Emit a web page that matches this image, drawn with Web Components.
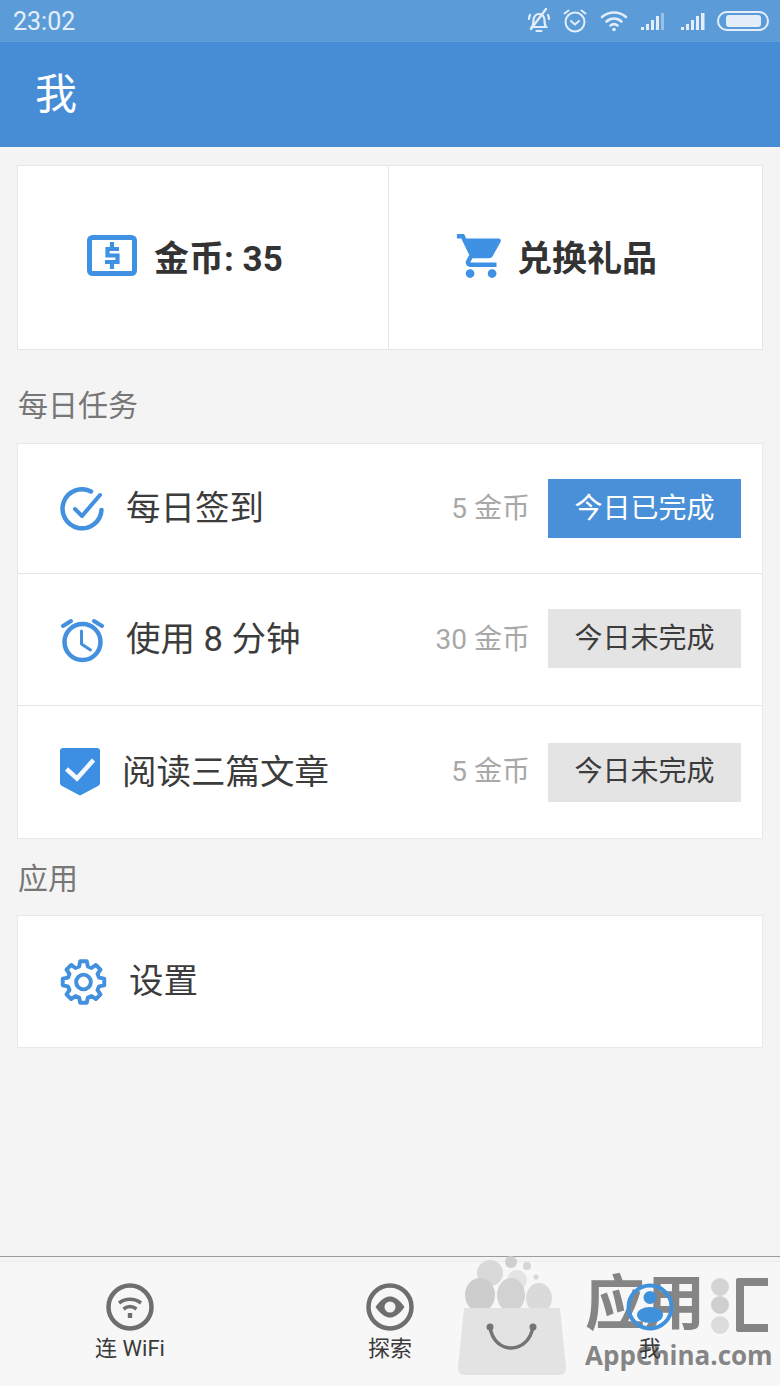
<!DOCTYPE html>
<html lang="zh">
<head>
<meta charset="utf-8">
<title>我</title>
<style>
  html, body { margin: 0; padding: 0; }
  body {
    width: 780px;
    height: 1386px;
    overflow: hidden;
    background: #f4f4f4;
    display: flex;
    flex-direction: column;
    position: relative;
    font-family: Roboto, "Noto Sans CJK SC", sans-serif;
  }
  main-content { flex: 1; }
</style>
</head>
<body>
  <status-bar time="23:02"></status-bar>
  <app-header>我</app-header>
  <main-content>
    <coin-card></coin-card>
    <section-label style="--label-top:41px;--label-bottom:22px">每日任务</section-label>
    <list-card>
      <task-row icon="check" coins="5 金币" height="129">每日签到<state-button slot="action" done>今日已完成</state-button></task-row>
      <task-row icon="clock" coins="30 金币" height="131">使用 8 分钟<state-button slot="action" style="margin-bottom:2px">今日未完成</state-button></task-row>
      <task-row icon="shield" coins="5 金币" height="132" last>阅读三篇文章<state-button slot="action">今日未完成</state-button></task-row>
    </list-card>
    <section-label style="--label-top:25px;--label-bottom:21px">应用</section-label>
    <list-card>
      <task-row icon="gear" height="131" last>设置</task-row>
    </list-card>
  </main-content>
  <tab-bar>
    <tab-item icon="wifi">连 WiFi</tab-item>
    <tab-item icon="eye">探索</tab-item>
    <tab-item icon="me">我</tab-item>
  </tab-bar>
  <app-watermark></app-watermark>

<script>
const FONT = 'Roboto, "Noto Sans CJK SC", sans-serif';
const BLUE = "#4a90d9";

// 8 rounded teeth, just computed instead of hand written
function gearPath(cx, cy, outer, inner, teeth) {
  let d = "";
  const step = (Math.PI * 2) / teeth;
  for (let i = 0; i < teeth; i += 1) {
    const a = i * step - Math.PI / 2;
    const pts = [
      [inner, a - step * 0.34],
      [outer, a - step * 0.2],
      [outer, a + step * 0.2],
      [inner, a + step * 0.34],
    ];
    pts.forEach(([r, t], idx) => {
      const x = (cx + r * Math.cos(t)).toFixed(1);
      const y = (cy + r * Math.sin(t)).toFixed(1);
      d += (i === 0 && idx === 0 ? "M" : "L") + x + " " + y + " ";
    });
  }
  return d + "Z";
}

const ICONS = {
  check: `<svg width="44" height="44" viewBox="0 0 44 44" fill="none" stroke="#4390de" stroke-width="4.500" stroke-linecap="round" stroke-linejoin="round">
      <path d="M31 4.500A19.500 19.500 0 1 0 41.500 23"/><path d="M15 22l7 7L40 8" stroke-width="4"/></svg>`,
  clock: `<svg width="44" height="46" viewBox="0 0 44 46" fill="none" stroke="#4390de" stroke-width="4.500" stroke-linecap="round" stroke-linejoin="round">
      <circle cx="22.500" cy="25" r="18"/><path d="M21.500 14v13l9 6" stroke-width="3"/><path d="M3 9l8-5M34 4l8 5" stroke-width="4"/></svg>`,
  shield: `<svg width="40" height="48" viewBox="0 0 40 48" fill="none">
      <path d="M3 0h34a3 3 0 0 1 3 3v32q0 2-2 3L21 47q-1 .5-2 0L2 38q-2-1-2-3V3a3 3 0 0 1 3-3z" fill="#3d8fe3"/>
      <path d="M6.500 21l10.500 9.500L33.500 12" stroke="#f4f8fd" stroke-width="4.500"/></svg>`,
  gear: `<svg width="47" height="48" viewBox="0 0 48 48" fill="none" stroke="#4390de" stroke-width="4" stroke-linejoin="round">
      <path d="${gearPath(24, 24, 21.5, 16.5, 8)}"/><circle cx="24" cy="24" r="7.500"/></svg>`,
  wifi: `<svg width="48" height="48" viewBox="0 0 48 48" fill="none" stroke="#6e6e6e" stroke-width="4.500">
      <circle cx="24" cy="24" r="21.500"/><path d="M13 20c6.500-5 15.500-5 22 0M17.500 26c4-3 9-3 13 0" stroke-width="3.500"/><rect x="21.800" y="30" width="4.400" height="5" fill="#6e6e6e" stroke="none"/></svg>`,
  eye: `<svg width="48" height="48" viewBox="0 0 48 48" fill="none" stroke="#6e6e6e" stroke-width="4.500">
      <circle cx="24" cy="24" r="21.500"/><path d="M9.500 24C15 16 20 13.500 24 13.500S33 16 38.500 24C33 32 28 34.500 24 34.500S15 32 9.500 24z" fill="#6e6e6e" stroke="none"/><circle cx="24" cy="24" r="5.500" fill="#f4f4f4" stroke="none"/></svg>`,
  me: `<svg width="48" height="48" viewBox="0 0 48 48" fill="none" stroke="#3f91dc" stroke-width="4">
      <circle cx="24" cy="24" r="21.500"/><circle cx="24" cy="14.500" r="6.500" fill="#3f91dc" stroke="none"/><ellipse cx="24" cy="32" rx="13" ry="8" fill="#3f91dc" stroke="none"/></svg>`,
};

class StatusBar extends HTMLElement {
  constructor() {
    super();
    this.attachShadow({ mode: "open" });
  }
  connectedCallback() {
    const c = "#e4eefa";
    this.shadowRoot.innerHTML = `
      <style>
        :host {
          display: flex;
          align-items: center;
          justify-content: space-between;
          height: 42px;
          padding: 0 11px 0 13px;
          box-sizing: border-box;
          background: #5b9cd8;
          box-shadow: inset 0 -1px 0 #5e9fdc;
          color: ${c};
          font: 25px/1 ${FONT};
        }
        .icons { display: flex; align-items: center; }
        svg { display: block; }
      </style>
      <span>${this.getAttribute("time")}</span>
      <div class="icons">
        <svg width="26" height="26" viewBox="0 0 26 26" fill="none" stroke="${c}" stroke-width="2.200" stroke-linecap="round" style="margin-right:10px">
          <path d="M6 19c1.500-2 1.500-4 1.500-7 0-3.500 2.500-6 5.500-6s5.500 2.500 5.500 6c0 3 0 5 1.500 7H6z"/><path d="M10.500 23h5M3 11c0-2 .5-3 1-4M23 11c0-2-.5-3-1-4"/><path d="M20 1L5 21"/></svg>
        <svg width="26" height="26" viewBox="0 0 26 26" fill="none" stroke="${c}" stroke-width="2" stroke-linecap="round" style="margin-right:12px">
          <circle cx="13" cy="14" r="9.500"/><path d="M9 13l4 3.500 4-3.500M2.500 5.500L6.500 2.500M19.500 2.500l4 3"/></svg>
        <svg width="28" height="22" viewBox="0 0 28 22" fill="none" stroke="${c}" stroke-width="2.600" stroke-linecap="round" style="margin-right:12px">
          <path d="M2 7c7-6 17-6 24 0M6.500 11.500c4.500-4 10.500-4 15 0M10.500 15.500c2-1.500 5-1.500 7 0"/><circle cx="14" cy="19.500" r="1.800" fill="${c}" stroke="none"/></svg>
        <svg width="26" height="18" viewBox="0 0 26 18" fill="${c}" style="margin-right:14px">
          <rect x="1" y="15" width="3" height="3"/><rect x="6" y="12" width="3" height="6"/><rect x="11" y="8" width="3" height="10"/><rect x="16" y="4" width="3" height="14"/><rect x="21" y="1" width="3" height="17" opacity=".45"/></svg>
        <svg width="27" height="18" viewBox="0 0 27 18" fill="${c}" style="margin-right:10px">
          <rect x="1" y="15" width="3" height="3"/><rect x="6" y="12" width="3" height="6"/><rect x="11" y="8" width="3" height="10"/><rect x="16" y="4" width="3" height="14"/><rect x="21" y="1" width="3.500" height="17"/></svg>
        <svg width="52" height="20" viewBox="0 0 52 20" fill="none">
          <rect x="1" y="1" width="50" height="18" rx="9" stroke="${c}" stroke-width="2"/><rect x="9" y="4" width="35" height="12" rx="3" fill="${c}"/></svg>
      </div>`;
  }
}

class AppHeader extends HTMLElement {
  constructor() {
    super();
    this.attachShadow({ mode: "open" }).innerHTML = `
      <style>
        :host {
          display: flex;
          align-items: center;
          height: 105px;
          padding: 0 0 0 35px;
          background: #478dd6;
          color: #fff;
          font: 42px/1 ${FONT};
        }
      </style>
      <slot></slot>`;
  }
}

class CoinCard extends HTMLElement {
  constructor() {
    super();
    this.attachShadow({ mode: "open" }).innerHTML = `
      <style>
        :host {
          display: flex;
          margin: 18px 17px 0;
          height: 185px;
          box-sizing: border-box;
          background: #fff;
          border: 1px solid #e6e6e6;
          color: #333;
          font: bold 35px/1 ${FONT};
        }
        .half { display: flex; align-items: center; justify-content: flex-start; }
        .coin { width: 371px; padding-left: 69px; box-sizing: border-box; border-right: 1px solid #e6e6e6; }
        .shop { flex: 1; padding-left: 67px; }
        .coin svg { margin-right: 17px; }
        .shop svg { margin-right: 13px; }
        svg { display: block; margin-bottom: 4px; }
        span { margin-top: 3px; }
      </style>
      <div class="half coin">
        <svg width="50" height="41" viewBox="0 0 50 41" fill="none">
          <rect x="2.500" y="2.500" width="45" height="36" rx="3" stroke="#3f91e4" stroke-width="5"/>
          <path d="M32 14H20.500v6.500h10V27H18M25 7v5M25 28v6" stroke="#3f91e4" stroke-width="4.200"/>
        </svg>
        <span>金币: 35</span>
      </div>
      <div class="half shop">
        <svg width="48" height="44" viewBox="1 2 21 20" fill="#3f91e4"><path d="M7 18c-1.100 0-1.990.9-1.990 2S5.900 22 7 22s2-.9 2-2-.9-2-2-2zM1 2v2h2l3.600 7.590-1.350 2.450c-.16.28-.25.61-.25.96 0 1.100.9 2 2 2h12v-2H7.420c-.14 0-.25-.11-.25-.25l.03-.12.9-1.630h7.450c.75 0 1.410-.41 1.750-1.030l3.580-6.490c.08-.14.12-.31.12-.48 0-.55-.45-1-1-1H5.210l-.94-2H1zm16 16c-1.100 0-1.990.9-1.990 2s.89 2 1.990 2 2-.9 2-2-.9-2-2-2z"/></svg>
        <span>兑换礼品</span>
      </div>`;
  }
}

class SectionLabel extends HTMLElement {
  constructor() {
    super();
    this.attachShadow({ mode: "open" }).innerHTML = `
      <style>
        :host {
          display: block;
          margin: var(--label-top) 17px var(--label-bottom) 18px;
          color: #777;
          font: 30px/30px ${FONT};
        }
      </style>
      <slot></slot>`;
  }
}

class ListCard extends HTMLElement {
  constructor() {
    super();
    this.attachShadow({ mode: "open" }).innerHTML = `
      <style>
        :host {
          display: block;
          margin: 0 17px;
          background: #fff;
          border: 1px solid #e8e8e8;
        }
      </style>
      <slot></slot>`;
  }
}

class TaskRow extends HTMLElement {
  constructor() {
    super();
    this.attachShadow({ mode: "open" });
  }
  connectedCallback() {
    const coins = this.getAttribute("coins");
    const last = this.hasAttribute("last");
    this.shadowRoot.innerHTML = `
      <style>
        :host {
          display: flex;
          align-items: center;
          height: ${this.getAttribute("height")}px;
          padding: 0 21px 0 42px;
          border-bottom: ${last ? "0" : "1px solid #e6e6e6"};
          color: #3c3c3c;
          font: 34.500px/1 ${FONT};
        }
        .icon { margin-right: 22px; }
        .icon svg { display: block; }
        .title { flex: 1; white-space: nowrap; }
        .coins { margin-right: 18px; color: #a8a8a8; font-size: 28px; }
      </style>
      <div class="icon">${ICONS[this.getAttribute("icon")]}</div>
      <div class="title"><slot></slot></div>
      ${coins ? `<div class="coins">${coins}</div>` : ""}
      <slot name="action"></slot>`;
  }
}

class StateButton extends HTMLElement {
  constructor() {
    super();
    this.attachShadow({ mode: "open" }).innerHTML = `
      <style>
        :host {
          display: flex;
          align-items: center;
          justify-content: center;
          width: 193px;
          height: 59px;
          background: #e4e4e4;
          color: #3c3c3c;
          font: 28px/1 ${FONT};
        }
        :host([done]) { background: ${BLUE}; color: #fff; }
      </style>
      <slot></slot>`;
  }
}

class TabBar extends HTMLElement {
  constructor() {
    super();
    this.attachShadow({ mode: "open" }).innerHTML = `
      <style>
        :host {
          display: flex;
          height: 130px;
          box-sizing: border-box;
          border-top: 1px solid #9c9c9c;
          background: #f7f7f7;
          box-shadow: inset 0 4px 0 #f4f4f4, inset 0 5px 0 #ebebeb;
          position: relative;
        }
      </style>
      <slot></slot>`;
  }
}

class TabItem extends HTMLElement {
  constructor() {
    super();
    this.attachShadow({ mode: "open" });
  }
  connectedCallback() {
    this.shadowRoot.innerHTML = `
      <style>
        :host {
          flex: 1;
          display: flex;
          flex-direction: column;
          align-items: center;
          padding-top: 26px;
          position: relative;
          z-index: 2;
          color: #3a3a3a;
          font: 22px/1 ${FONT};
        }
        svg { display: block; height: 48px; width: 48px; margin-bottom: 7px; }
      </style>
      ${ICONS[this.getAttribute("icon")]}
      <slot></slot>`;
  }
}

// AppChina mark stamped over the bottom right corner of the screenshot
class AppWatermark extends HTMLElement {
  constructor() {
    super();
    this.attachShadow({ mode: "open" }).innerHTML = `
      <style>
        :host {
          position: absolute;
          left: 458px;
          top: 1256px;
          width: 322px;
          height: 130px;
          display: flex;
          pointer-events: none;
        }
        svg { display: block; flex: none; }
        .brand {
          margin-left: 19px;
          padding-top: 17px;
          flex: none;
          width: 190px;
          color: #858585;
        }
        .cn { display: flex; align-items: center; height: 64px; white-space: nowrap; font: bold 60px/64px ${FONT}; }
        .cn span { flex: none; }
        .cn svg { margin: 0 7px 0 6px; }
        .frame {
          flex: none;
          width: 24px;
          height: 38px;
          border: 8px solid #858585;
          border-right: 0;
          border-radius: 3px 0 0 3px;
        }
        .en { margin-top: 4px; font: bold 26px/28px "Open Sans", sans-serif; letter-spacing: 0; white-space: nowrap; }
      </style>
      <svg width="108" height="122" viewBox="0 0 108 122">
        <circle cx="32" cy="17" r="13" fill="#d9d9d9"/>
        <circle cx="53" cy="6" r="6" fill="#cfcfcf"/>
        <circle cx="69" cy="10" r="4" fill="#d6d6d6"/>
        <circle cx="78" cy="21" r="2.500" fill="#d6d6d6"/>
        <circle cx="59" cy="24" r="10" fill="#e4e4e4"/>
        <ellipse cx="22" cy="39" rx="15" ry="17" fill="#cdcdcd"/>
        <ellipse cx="53" cy="39" rx="14" ry="17" fill="#d2d2d2"/>
        <ellipse cx="81" cy="42" rx="13" ry="15" fill="#dadada"/>
        <path d="M6 52h96l6 60q0 7-6 7H6q-6 0-6-7z" fill="#e3e3e3"/>
        <path d="M32 71c4 28 38 28 43 0" fill="none" stroke="#747474" stroke-width="3.500"/>
        <circle cx="32" cy="71" r="3.500" fill="#747474"/><circle cx="75" cy="71" r="3.500" fill="#747474"/>
      </svg>
      <div class="brand">
        <div class="cn"><span>应用</span><svg width="18" height="64" viewBox="0 0 18 64"><circle cx="9" cy="14" r="9" fill="#d4d4d4"/><circle cx="9" cy="32" r="9" fill="#cfcfcf"/><circle cx="9" cy="52" r="9" fill="#dcdcdc"/></svg><div class="frame"></div></div>
        <div class="en">AppChina.com</div>
      </div>`;
  }
}

customElements.define("status-bar", StatusBar);
customElements.define("app-header", AppHeader);
customElements.define("coin-card", CoinCard);
customElements.define("section-label", SectionLabel);
customElements.define("list-card", ListCard);
customElements.define("task-row", TaskRow);
customElements.define("state-button", StateButton);
customElements.define("tab-bar", TabBar);
customElements.define("tab-item", TabItem);
customElements.define("app-watermark", AppWatermark);
</script>
</body>
</html>
